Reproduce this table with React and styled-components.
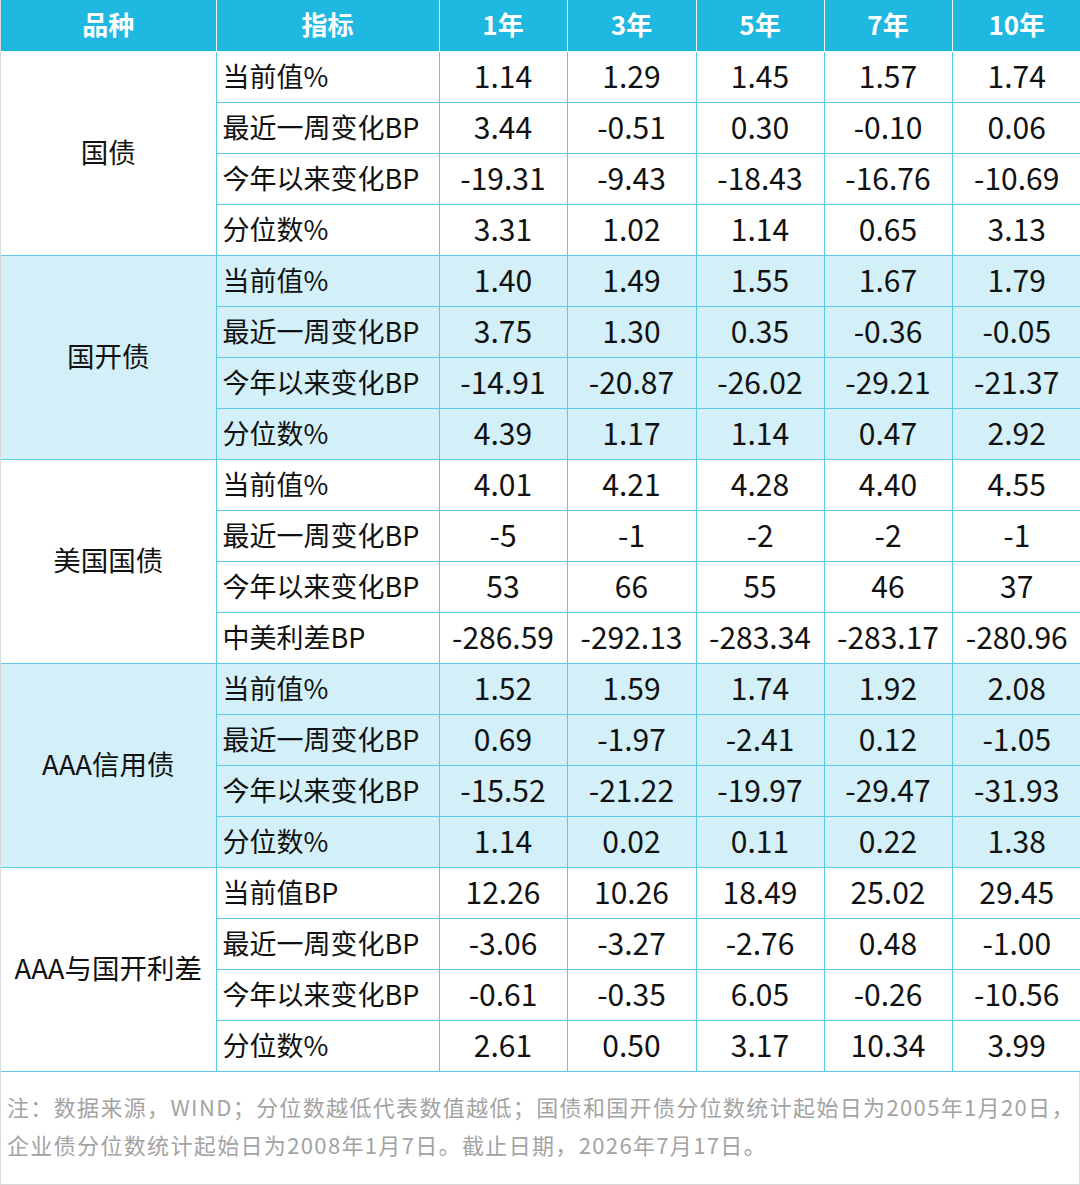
import React from "react";
import styled, { createGlobalStyle } from "styled-components";

const GlobalStyle = createGlobalStyle`
  html, body {
    margin: 0;
    padding: 0;
    background: #ffffff;
  }
  body {
    font-family: "Noto Sans CJK SC", "Noto Sans", sans-serif;
  }
`;

const groups = [
  {
    name: "国债",
    shaded: false,
    rows: [
      ["当前值%", "1.14", "1.29", "1.45", "1.57", "1.74"],
      ["最近一周变化BP", "3.44", "-0.51", "0.30", "-0.10", "0.06"],
      ["今年以来变化BP", "-19.31", "-9.43", "-18.43", "-16.76", "-10.69"],
      ["分位数%", "3.31", "1.02", "1.14", "0.65", "3.13"],
    ],
  },
  {
    name: "国开债",
    shaded: true,
    rows: [
      ["当前值%", "1.40", "1.49", "1.55", "1.67", "1.79"],
      ["最近一周变化BP", "3.75", "1.30", "0.35", "-0.36", "-0.05"],
      ["今年以来变化BP", "-14.91", "-20.87", "-26.02", "-29.21", "-21.37"],
      ["分位数%", "4.39", "1.17", "1.14", "0.47", "2.92"],
    ],
  },
  {
    name: "美国国债",
    shaded: false,
    rows: [
      ["当前值%", "4.01", "4.21", "4.28", "4.40", "4.55"],
      ["最近一周变化BP", "-5", "-1", "-2", "-2", "-1"],
      ["今年以来变化BP", "53", "66", "55", "46", "37"],
      ["中美利差BP", "-286.59", "-292.13", "-283.34", "-283.17", "-280.96"],
    ],
  },
  {
    name: "AAA信用债",
    shaded: true,
    rows: [
      ["当前值%", "1.52", "1.59", "1.74", "1.92", "2.08"],
      ["最近一周变化BP", "0.69", "-1.97", "-2.41", "0.12", "-1.05"],
      ["今年以来变化BP", "-15.52", "-21.22", "-19.97", "-29.47", "-31.93"],
      ["分位数%", "1.14", "0.02", "0.11", "0.22", "1.38"],
    ],
  },
  {
    name: "AAA与国开利差",
    shaded: false,
    rows: [
      ["当前值BP", "12.26", "10.26", "18.49", "25.02", "29.45"],
      ["最近一周变化BP", "-3.06", "-3.27", "-2.76", "0.48", "-1.00"],
      ["今年以来变化BP", "-0.61", "-0.35", "6.05", "-0.26", "-10.56"],
      ["分位数%", "2.61", "0.50", "3.17", "10.34", "3.99"],
    ],
  },
];

const headers = ["品种", "指标", "1年", "3年", "5年", "7年", "10年"];
const widths = [215, 223, 128, 129, 128, 128, 129];

const Frame = styled.div`
  width: 1080px;
  box-sizing: border-box;
  border: 1px solid #d8d8d8;
  border-top: none;
  background: #ffffff;
`;

const Table = styled.table`
  width: 100%;
  border-collapse: collapse;
  table-layout: fixed;
`;

const HeadRow = styled.tr`
  height: 51px;
`;

const HeadCell = styled.th`
  padding: 0 0 3px;
  background: #1fb8e0;
  color: #ffffff;
  font-size: 26px;
  line-height: 1;
  font-weight: 700;
  text-align: center;
  border: 1px solid #e6f7fc;
  border-top: none;
  &:first-child {
    border-left: none;
  }
  &:last-child {
    border-right: none;
  }
`;

const Row = styled.tr`
  height: 51px;
  background: ${(p) => (p.$shaded ? "#d3f0f9" : "#ffffff")};
`;

const Cell = styled.td`
  padding: 0 0 3px;
  border: 1px solid #5ccbea;
  color: #111111;
  font-size: 30px;
  line-height: 1;
  text-align: center;
  white-space: nowrap;
  &:first-child {
    border-left: none;
  }
  &:last-child {
    border-right: none;
  }
`;

const LabelCell = styled(Cell)`
  text-align: left;
  padding-left: 6px;
  font-size: 27px;
`;

const GroupCell = styled(Cell)`
  font-size: 27.5px;
`;

const Note = styled.div`
  padding: 15px 0 21px 6px;
  color: #a3a3a3;
  font-size: 22px;
  line-height: 38px;
  letter-spacing: 1.35px;
  white-space: nowrap;
`;

export default function App() {
  return (
    <>
      <GlobalStyle />
      <Frame>
        <Table>
          <colgroup>
            {widths.map((w, i) => (
              <col key={i} style={{ width: w }} />
            ))}
          </colgroup>
          <thead>
            <HeadRow>
              {headers.map((h) => (
                <HeadCell key={h}>{h}</HeadCell>
              ))}
            </HeadRow>
          </thead>
          <tbody>
            {groups.map((g) =>
              g.rows.map((r, i) => (
                <Row key={g.name + i} $shaded={g.shaded}>
                  {i === 0 && <GroupCell rowSpan={g.rows.length}>{g.name}</GroupCell>}
                  <LabelCell>{r[0]}</LabelCell>
                  {r.slice(1).map((v, j) => (
                    <Cell key={j}>{v}</Cell>
                  ))}
                </Row>
              ))
            )}
          </tbody>
        </Table>
        <Note>
          注：数据来源，WIND；分位数越低代表数值越低；国债和国开债分位数统计起始日为2005年1月20日，
          <br />
          企业债分位数统计起始日为2008年1月7日。截止日期，2026年7月17日。
        </Note>
      </Frame>
    </>
  );
}
